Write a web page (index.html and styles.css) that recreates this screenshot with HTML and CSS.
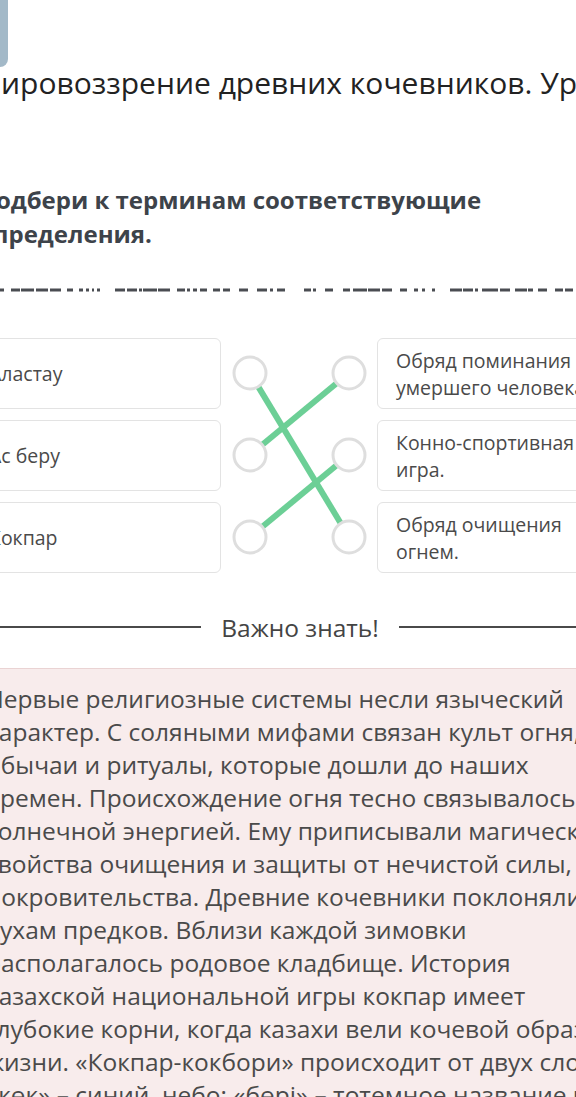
FILE: index.html
```html
<!DOCTYPE html>
<html lang="ru">
<head>
<meta charset="utf-8">
<title>Мировоззрение древних кочевников</title>
<link rel="stylesheet" href="styles.css">
</head>
<body>
<div class="page">
  <div class="topbar"><div class="back-btn"></div></div>
  <h1 class="title">Мировоззрение древних кочевников. Урок 2</h1>
  <h2 class="task">Подбери к терминам соответствующие<br>определения.</h2>
  <div class="dashes">
    <svg width="576" height="4" viewBox="0 0 576 4">
      <path d="M0 2H4M11 2H20M21 2H34M36 2H48M50 2H61M67 2H73M79 2H83M86 2H89M92 2H94M97 2H100M115 2H125M127 2H137M139 2H142M143 2H157M158 2H170M177 2H185M187 2H190M193 2H197M200 2H207M213 2H220M223 2H230M239 2H248M257 2H267M270 2H273M277 2H285M304 2H311M313 2H316M325 2H333M343 2H350M353 2H367M368 2H380M382 2H392M400 2H407M414 2H418M422 2H425M432 2H435M450 2H462M463 2H473M475 2H478M482 2H498M500 2H510M515 2H527M528 2H533M538 2H547M555 2H563M565 2H573" stroke="#4a4d52" stroke-width="3"/>
    </svg>
  </div>
  <div class="match">
    <div class="col">
      <div class="card">Аластау</div>
      <div class="card">Ас беру</div>
      <div class="card">Кокпар</div>
    </div>
    <svg class="links" width="156" height="235" viewBox="0 0 156 235">
      <g stroke="#6ccf96" stroke-width="6" stroke-linecap="butt">
        <line x1="29" y1="35" x2="128" y2="199"/>
        <line x1="29" y1="117" x2="128" y2="35"/>
        <line x1="29" y1="199" x2="128" y2="117"/>
      </g>
      <g fill="#fff" stroke="#dedede" stroke-width="3">
        <circle cx="29" cy="35" r="16"/>
        <circle cx="29" cy="117" r="16"/>
        <circle cx="29" cy="199" r="16"/>
        <circle cx="128" cy="35" r="16"/>
        <circle cx="128" cy="117" r="16"/>
        <circle cx="128" cy="199" r="16"/>
      </g>
    </svg>
    <div class="col">
      <div class="card">Обряд поминания<br>умершего человека.</div>
      <div class="card">Конно-спортивная<br>игра.</div>
      <div class="card">Обряд очищения<br>огнем.</div>
    </div>
  </div>
  <div class="divider"><span class="rule"></span><span class="divider-text">Важно знать!</span><span class="rule"></span></div>
  <div class="note">
    <p>Первые религиозные системы несли языческий<br>
характер. С соляными мифами связан культ огня,<br>
обычаи и ритуалы, которые дошли до наших<br>
времен. Происхождение огня тесно связывалось с<br>
солнечной энергией. Ему приписывали магические<br>
свойства очищения и защиты от нечистой силы,<br>
покровительства. Древние кочевники поклонялись<br>
духам предков. Вблизи каждой зимовки<br>
располагалось родовое кладбище. История<br>
казахской национальной игры кокпар имеет<br>
глубокие корни, когда казахи вели кочевой образ<br>
жизни. «Кокпар-кокбори» происходит от двух слов:<br>
«көк» – синий, небо; «бөрі» – тотемное название волка.</p>
  </div>
</div>
</body>
</html>
```
FILE: styles.css
```css
html, body {
  margin: 0;
  padding: 0;
  background: #fff;
  overflow: hidden;
}
body {
  font-family: "Open Sans", "Noto Sans", sans-serif;
  color: #333;
}
.page {
  width: 660px;
  margin-left: -30px;
}
.topbar {
  height: 67px;
}
.back-btn {
  width: 38px;
  height: 67px;
  background: #a3b9c8;
  border-radius: 0 0 8px 0;
}
.title {
  margin: 0;
  padding-left: 4px;
  font-size: 30px;
  line-height: 32px;
  font-weight: 400;
  color: #222;
  white-space: nowrap;
}
.task {
  margin: 84px 0 0;
  padding-left: 8px;
  font-size: 24px;
  line-height: 34px;
  font-weight: 700;
  color: #3d434a;
  white-space: nowrap;
}
.dashes {
  margin: 37px 0 0 30px;
  height: 4px;
}
.dashes svg {
  display: block;
}
.match {
  margin-top: 46px;
  display: grid;
  grid-template-columns: 251px 156px 253px;
}
.col {
  display: flex;
  flex-direction: column;
  gap: 11px;
}
.card {
  height: 71px;
  box-sizing: border-box;
  border: 1px solid #e3e3e3;
  border-radius: 6px;
  padding: 0 18px;
  display: flex;
  align-items: center;
  font-size: 19.5px;
  line-height: 27px;
  color: #4a4a4a;
  white-space: nowrap;
}
.links {
  display: block;
}
.divider {
  margin-top: 40px;
  display: flex;
  align-items: center;
  height: 28px;
}
.rule {
  flex: 1;
  height: 2px;
  background: #4a4a4a;
}
.divider-text {
  margin: 0 20px;
  font-size: 24.5px;
  color: #444;
}
.note {
  margin-top: 27px;
  background: #f8ecec;
  border-top: 1px solid #ead3d3;
  padding: 13px 16px;
}
.note p {
  margin: 0;
  font-size: 24.5px;
  line-height: 33px;
  color: #4a4a4a;
  white-space: nowrap;
}
```
